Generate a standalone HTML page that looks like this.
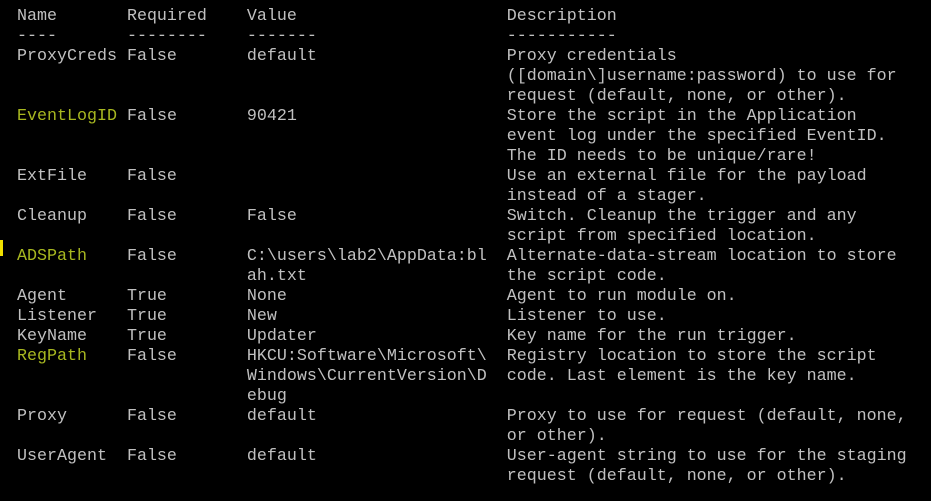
<!DOCTYPE html>
<html><head><meta charset="utf-8"><style>
html,body{margin:0;padding:0;background:#000;width:931px;height:501px;overflow:hidden}
pre{position:absolute;left:17px;top:7px;margin:0;font-family:"Liberation Mono",monospace;font-size:16.67px;line-height:20px;color:#c0c0c0}
.g{color:#a8b820}
.bar{position:absolute;left:0;top:240px;width:3px;height:16px;background:#f0e000}
</style></head><body>
<div class="bar"></div>
<pre>Name       Required    Value                     Description
----       --------    -------                   -----------
ProxyCreds False       default                   Proxy credentials
                                                 ([domain\]username:password) to use for
                                                 request (default, none, or other).
<span class="g">EventLogID</span> False       90421                     Store the script in the Application
                                                 event log under the specified EventID.
                                                 The ID needs to be unique/rare!
ExtFile    False                                 Use an external file for the payload
                                                 instead of a stager.
Cleanup    False       False                     Switch. Cleanup the trigger and any
                                                 script from specified location.
<span class="g">ADSPath</span>    False       C:\users\lab2\AppData:bl  Alternate-data-stream location to store
                       ah.txt                    the script code.
Agent      True        None                      Agent to run module on.
Listener   True        New                       Listener to use.
KeyName    True        Updater                   Key name for the run trigger.
<span class="g">RegPath</span>    False       HKCU:Software\Microsoft\  Registry location to store the script
                       Windows\CurrentVersion\D  code. Last element is the key name.
                       ebug
Proxy      False       default                   Proxy to use for request (default, none,
                                                 or other).
UserAgent  False       default                   User-agent string to use for the staging
                                                 request (default, none, or other).</pre>
</body></html>
